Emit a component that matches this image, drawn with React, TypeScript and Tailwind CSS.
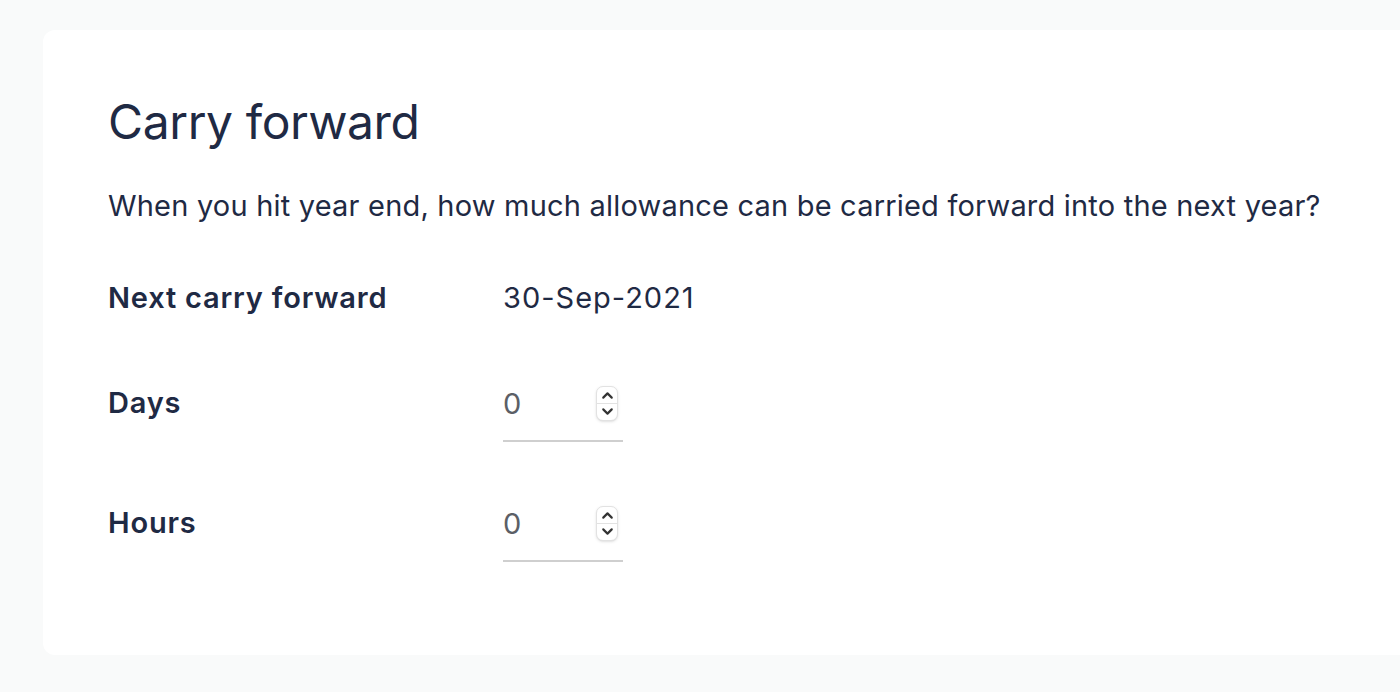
import { ChevronUp, ChevronDown } from 'lucide-react';

function NumberField({ value }: { value: number }) {
  return (
    <div className="w-[120px] h-[76px] flex items-center border-b-2 border-[#cfcfcf]">
      <span className="flex-1 text-[29px] text-[#5c5f66] leading-none">{value}</span>
      <div className="mr-[5px] w-[22px] h-[35px] rounded-[7px] border border-[#e2e2e2] bg-white shadow-sm flex flex-col items-center justify-center">
        <ChevronUp size={17} strokeWidth={3} className="text-[#333] -mb-px" />
        <div className="w-full h-px bg-[#e2e2e2]" />
        <ChevronDown size={17} strokeWidth={3} className="text-[#333] -mt-px" />
      </div>
    </div>
  );
}

export default function App() {
  return (
    <div className="min-h-[692px] bg-[#f9fafa] pt-[30px] pl-[43px] font-['Inter',sans-serif] text-[#1f2a44] overflow-hidden">
      <div className="w-[1400px] h-[625px] bg-white rounded-[12px] pl-[65px] pt-[68px]">
        <h1 className="text-[48px] leading-none tracking-[-0.4px]">Carry forward</h1>
        <p className="mt-[45px] text-[29px] leading-none tracking-[0.2px]">
          When you hit year end, how much allowance can be carried forward into the next year?
        </p>

        <div className="mt-[63px] flex items-center">
          <span className="w-[395px] text-[29px] font-semibold leading-none tracking-[0.8px]">Next carry forward</span>
          <span className="text-[29px] leading-none tracking-[1px]">30-Sep-2021</span>
        </div>

        <div className="mt-[54px] flex items-start">
          <span className="w-[395px] pt-[22px] text-[29px] font-semibold leading-none tracking-[0.8px]">Days</span>
          <NumberField value={0} />
        </div>

        <div className="mt-[44px] flex items-start">
          <span className="w-[395px] pt-[22px] text-[29px] font-semibold leading-none tracking-[0.8px]">Hours</span>
          <NumberField value={0} />
        </div>
      </div>
    </div>
  );
}
